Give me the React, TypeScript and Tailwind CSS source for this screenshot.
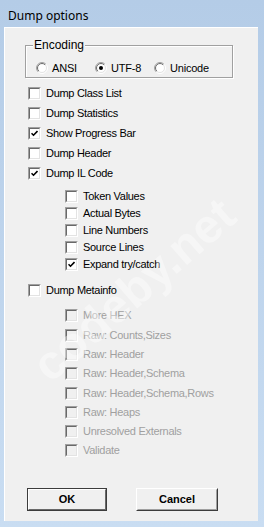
import React from "react";

const ui = { fontFamily: '"Liberation Sans", Arial, sans-serif' };

function CheckBox({ checked = false, disabled = false }: { checked?: boolean; disabled?: boolean }) {
  return (
    <span className="flex h-[13px] w-[13px] shrink-0 border border-t-[#a0a0a0] border-l-[#a0a0a0] border-b-white border-r-white">
      <span
        className={
          "flex flex-1 items-center justify-center border border-t-[#696969] border-l-[#696969] border-b-[#e3e3e3] border-r-[#e3e3e3] " +
          (disabled ? "bg-[#f0f0f0]" : "bg-white")
        }
      >
        {checked && (
          <svg width="7" height="7" viewBox="0 0 7 7">
            <path d="M0.5 3.2 L2.5 5.2 L6.5 1" fill="none" stroke="#000" strokeWidth="1.6" />
          </svg>
        )}
      </span>
    </span>
  );
}

function Radio({ on = false }: { on?: boolean }) {
  return (
    <svg width="12" height="12" viewBox="0 0 12 12" className="shrink-0">
      <defs>
        <linearGradient id="ro" x1="0" y1="0" x2="1" y2="1">
          <stop offset="0.45" stopColor="#a0a0a0" />
          <stop offset="0.55" stopColor="#ffffff" />
        </linearGradient>
        <linearGradient id="ri" x1="0" y1="0" x2="1" y2="1">
          <stop offset="0.45" stopColor="#696969" />
          <stop offset="0.55" stopColor="#e3e3e3" />
        </linearGradient>
      </defs>
      <circle cx="6" cy="6" r="5.5" fill="none" stroke="url(#ro)" />
      <circle cx="6" cy="6" r="4.5" fill="#fff" stroke="url(#ri)" />
      {on && <circle cx="6" cy="6" r="2" fill="#000" />}
    </svg>
  );
}

function Row({ label, checked, disabled, sub, h }: { label: string; checked?: boolean; disabled?: boolean; sub?: boolean; h: string }) {
  return (
    <div className={"flex items-center gap-[5px] " + h + (sub ? " pl-[60px]" : " pl-[23px]")}>
      <CheckBox checked={checked} disabled={disabled} />
      <span className={"text-[11px] tracking-[-0.3px] " + (disabled ? "text-[#a0a0a0]" : "text-black")}>{label}</span>
    </div>
  );
}

const main = [
  { label: "Dump Class List" },
  { label: "Dump Statistics" },
  { label: "Show Progress Bar", checked: true },
  { label: "Dump Header" },
  { label: "Dump IL Code", checked: true },
];

const ilOpts = [
  { label: "Token Values" },
  { label: "Actual Bytes" },
  { label: "Line Numbers" },
  { label: "Source Lines" },
  { label: "Expand try/catch", checked: true },
];

const metaOpts = [
  { label: "More HEX", h: "h-[19px]" },
  { label: "Raw: Counts,Sizes", h: "h-[20px]" },
  { label: "Raw: Header", h: "h-[18px]" },
  { label: "Raw: Header,Schema", h: "h-[21px]" },
  { label: "Raw: Header,Schema,Rows", h: "h-[19px]" },
  { label: "Raw: Heaps", h: "h-[19px]" },
  { label: "Unresolved Externals", h: "h-[19px]" },
  { label: "Validate", h: "h-[19px]" },
];

export default function App() {
  return (
    <div className="relative flex h-[527px] w-[264px] flex-col overflow-hidden bg-gradient-to-b from-[#b4cce7] to-[#c9ddf2]" style={ui}>
      <div className="flex h-[27px] items-center pl-[8px] pt-[4px] text-[12px] text-black" style={{ fontFamily: '"Noto Sans", "Liberation Sans", sans-serif' }}>
        Dump options
      </div>
      <div className="mx-[4px] mr-[6px] flex h-[494px] flex-col border-t border-l border-white bg-[#f0f0f0]">
        <fieldset className="ml-[20px] mt-[11px] h-[39px] w-[208px] border border-[#a0a0a0] shadow-[inset_1px_1px_0_#fff,1px_1px_0_#fff]">
          <legend className="ml-[7px] bg-[#f0f0f0] px-[1px] text-[12px] leading-[12px] text-black">Encoding</legend>
          <div className="flex pl-[10px] pt-[9px]">
            {[
              { l: "ANSI", on: false },
              { l: "UTF-8", on: true },
              { l: "Unicode", on: false },
            ].map((r) => (
              <div key={r.l} className="flex w-[59px] items-center gap-[4px]">
                <Radio on={r.on} />
                <span className="text-[11px] tracking-[-0.2px]">{r.l}</span>
              </div>
            ))}
          </div>
        </fieldset>

        <div className="mt-[5px] flex flex-col">
          {main.map((m) => (
            <Row key={m.label} label={m.label} checked={m.checked} h="h-[20px]" />
          ))}
        </div>
        <div className="mt-[5px] flex flex-col">
          {ilOpts.map((m) => (
            <Row key={m.label} label={m.label} checked={m.checked} sub h="h-[17px]" />
          ))}
        </div>
        <div className="mt-[7px]">
          <Row label="Dump Metainfo" h="h-[20px]" />
        </div>
        <div className="mt-[6px] flex flex-col">
          {metaOpts.map((m) => (
            <Row key={m.label} label={m.label} disabled sub h={m.h} />
          ))}
        </div>

        <div className="mt-[28px] flex gap-[29px] pl-[22px]">
          <button className="h-[23px] w-[80px] border border-[#3c3c3c] bg-[#f0f0f0] p-0">
            <span className="flex h-full w-full items-center justify-center border border-t-white border-l-white border-b-[#696969] border-r-[#696969] text-[11px] font-bold text-black">
              OK
            </span>
          </button>
          <button className="h-[23px] w-[82px] border border-t-white border-l-white border-b-[#3c3c3c] border-r-[#3c3c3c] bg-[#f0f0f0] p-0">
            <span className="flex h-full w-full items-center justify-center border border-t-[#f0f0f0] border-l-[#f0f0f0] border-b-[#a0a0a0] border-r-[#a0a0a0] text-[11px] font-bold text-black">
              Cancel
            </span>
          </button>
        </div>
      </div>
      <div className="pointer-events-none absolute left-[134px] top-[290px] -translate-x-1/2 -translate-y-1/2 -rotate-[41deg] whitespace-nowrap text-[48px] font-bold text-white/40">
        codeby.net
      </div>
    </div>
  );
}
